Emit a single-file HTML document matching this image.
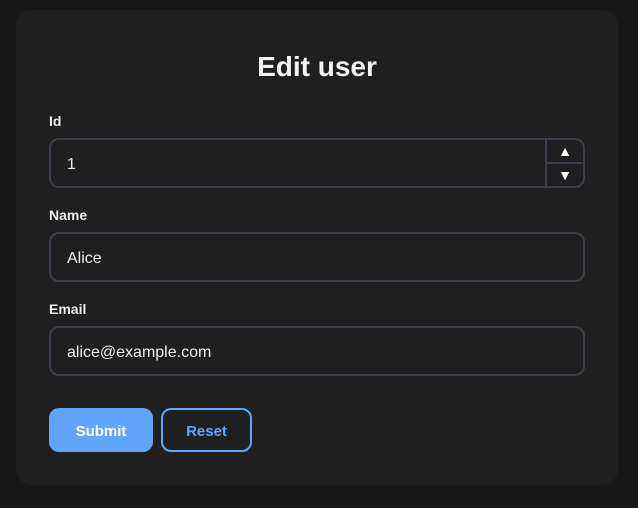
<!DOCTYPE html>
<html><head><style>
body{margin:0;background:#181818;width:638px;height:508px;font-family:"Liberation Sans",sans-serif;position:relative;overflow:hidden}
.card{position:absolute;left:16px;top:10px;width:602px;height:475px;background:#1f1f1f;border-radius:16px}
h1{position:absolute;left:0;right:0;top:38px;margin:0;text-align:center;color:#f3f3f3;font-size:28px;font-weight:bold;line-height:38px}
.l{position:absolute;left:33px;color:#eee;font-size:14px;font-weight:bold}
.in{position:absolute;left:33px;height:46px;border:2px solid #3b3f4c;border-radius:10px;color:#eee;font-size:16px;line-height:50px;padding-left:16px;box-sizing:content-box;width:516px}
.sp{position:absolute;right:0;top:0;width:36px;height:46px;border-left:2px solid #3b3f4c;font-size:14px;color:#fff}
.sp div{height:23px;line-height:23px;text-align:center}
.sp div:first-child{border-bottom:2px solid #3b3f4c;height:22px}
.b{position:absolute;top:398px;height:44px;border-radius:10px;font-size:15px;font-weight:bold;text-align:center;line-height:47px;box-sizing:border-box}
</style></head><body>
<div class="card">
<h1>Edit user</h1>
<div class="l" style="top:103px">Id</div>
<div class="in" style="top:128px">1<div class="sp"><div>▲</div><div>▼</div></div></div>
<div class="l" style="top:197px">Name</div>
<div class="in" style="top:222px">Alice</div>
<div class="l" style="top:291px">Email</div>
<div class="in" style="top:316px">alice@example.com</div>
<div class="b" style="left:33px;width:104px;background:#60a5fa;color:#fff">Submit</div>
<div class="b" style="left:145px;width:91px;border:2px solid #60a5fa;color:#60a5fa;line-height:43px">Reset</div>
</div>
</body></html>
